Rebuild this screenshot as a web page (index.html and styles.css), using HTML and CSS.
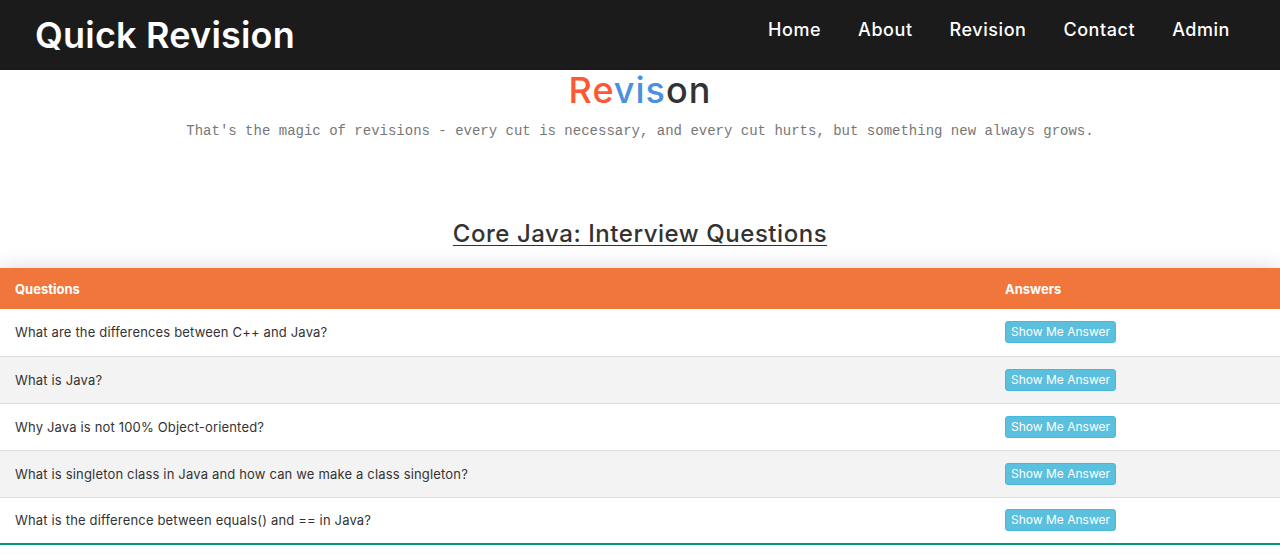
FILE: index.html
```html
<!DOCTYPE html>
<html lang="en">
<head>
<meta charset="utf-8">
<title>Quick Revision</title>
<link rel="stylesheet" href="styles.css">
</head>
<body>
<header class="navbar">
  <a class="brand" href="#">Quick Revision</a>
  <nav class="nav">
    <a href="#">Home</a>
    <a href="#">About</a>
    <a href="#">Revision</a>
    <a href="#">Contact</a>
    <a href="#">Admin</a>
  </nav>
</header>
<main>
  <section class="hero">
    <h1 class="hero-title"><span class="c-red">Re</span><span class="c-blue">vis</span><span class="c-dark">on</span></h1>
    <p class="quote">That's the magic of revisions - every cut is necessary, and every cut hurts, but something new always grows.</p>
  </section>
  <h2 class="topic">Core Java: Interview Questions</h2>
  <table class="styled-table">
    <thead>
      <tr><th class="col-q">Questions</th><th class="col-a">Answers</th></tr>
    </thead>
    <tbody>
      <tr><td>What are the differences between C++ and Java?</td><td><button class="btn-answer">Show Me Answer</button></td></tr>
      <tr><td>What is Java?</td><td><button class="btn-answer">Show Me Answer</button></td></tr>
      <tr><td>Why Java is not 100% Object-oriented?</td><td><button class="btn-answer">Show Me Answer</button></td></tr>
      <tr><td>What is singleton class in Java and how can we make a class singleton?</td><td><button class="btn-answer">Show Me Answer</button></td></tr>
      <tr><td>What is the difference between equals() and == in Java?</td><td><button class="btn-answer">Show Me Answer</button></td></tr>
    </tbody>
  </table>
</main>
</body>
</html>
```
FILE: styles.css
```css
* { box-sizing: border-box; }
html, body { margin: 0; padding: 0; }
body {
  font-family: Inter, "Open Sans", sans-serif;
  background: #fff;
  color: #333;
}
.navbar {
  height: 70px;
  background: #1b1b1b;
  display: flex;
  align-items: flex-start;
  justify-content: space-between;
  padding: 0 50px 0 35px;
}
.brand {
  color: #fff;
  text-decoration: none;
  font-size: 36px;
  font-weight: 600;
  line-height: 70px;
  letter-spacing: 0.2px;
}
.nav {
  display: flex;
  gap: 37px;
  padding-top: 18px;
}
.nav a {
  color: #fff;
  text-decoration: none;
  font-size: 18px;
  font-weight: 500;
  line-height: 24px;
  letter-spacing: 0.55px;
}
.hero { text-align: center; }
.hero-title {
  margin: 0;
  font-size: 36px;
  font-weight: 500;
  line-height: 40px;
  letter-spacing: 1px;
}
.c-red { color: #ff5733; }
.c-blue { color: #4a90e2; }
.c-dark { color: #333; }
.quote {
  margin: 11px 0 0;
  font-family: "Liberation Mono", monospace;
  font-size: 14px;
  line-height: 20px;
  color: #777;
}
.topic {
  margin: 76px 0 17px;
  text-align: center;
  font-size: 24px;
  font-weight: 500;
  line-height: 34px;
  letter-spacing: 0.55px;
  text-decoration: underline;
  text-underline-offset: 3px;
  text-decoration-thickness: 1px;
  color: #333;
}
.styled-table {
  width: 100%;
  border-collapse: collapse;
  font-size: 13px;
  box-shadow: 0 0 20px rgba(0, 0, 0, 0.15);
}
.styled-table thead tr {
  background: #f0763c;
  color: #fff;
  text-align: left;
}
.styled-table th {
  height: 41px;
  padding: 0 15px;
  font-weight: 700;
}
.col-q { width: 990px; }
.styled-table td {
  height: 47px;
  padding: 0 15px;
  color: #333;
  letter-spacing: 0.17px;
}
.styled-table tbody tr { border-bottom: 1px solid #ddd; }
.styled-table tbody tr:nth-of-type(even) { background: #f3f3f3; }
.styled-table tbody tr:last-of-type { border-bottom: 2px solid #009879; }
.btn-answer {
  font-family: inherit;
  font-size: 12px;
  line-height: 18px;
  letter-spacing: 0;
  color: #fff;
  background: #5bc0de;
  border: 1px solid #46b8da;
  border-radius: 3px;
  padding: 1px 5px;
  cursor: pointer;
}
```
